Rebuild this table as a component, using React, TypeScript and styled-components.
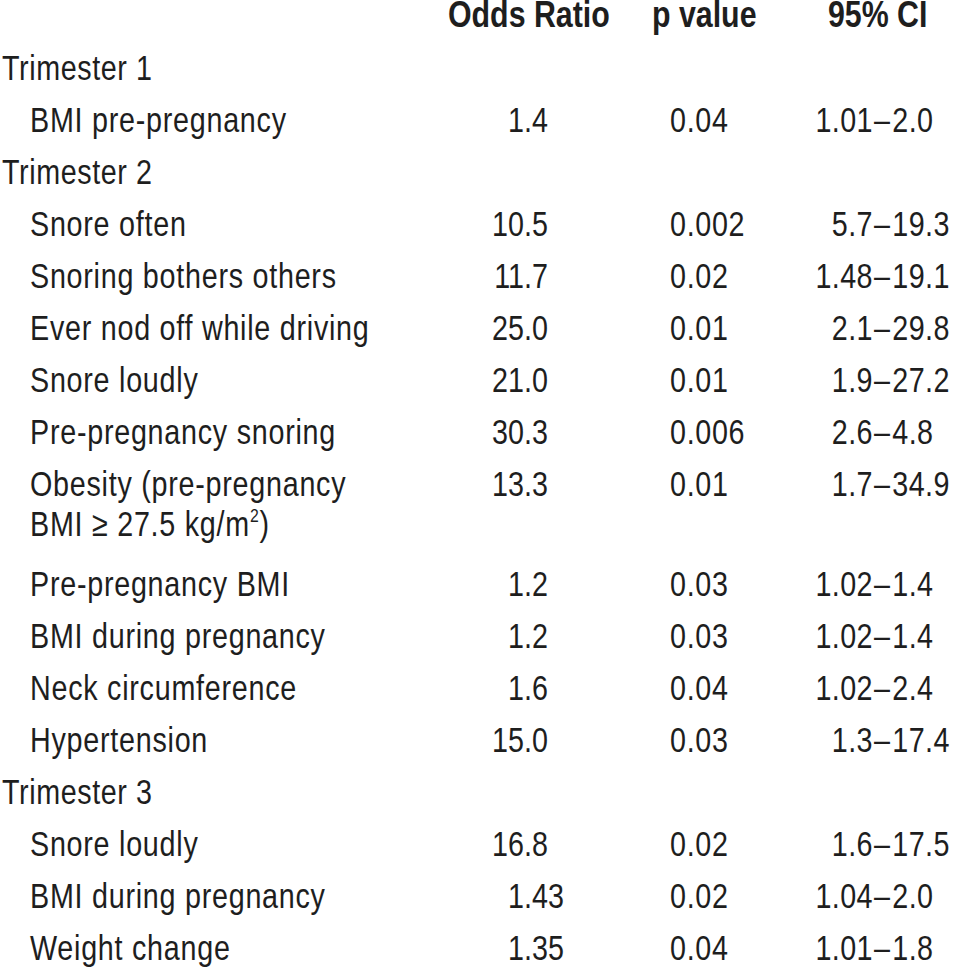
import styled, { createGlobalStyle } from 'styled-components';

interface Entry {
	label: string;
	odds: string;
	p: string;
	ci: [string, string];
	note?: boolean;
}

interface Section {
	title: string;
	rows: Entry[];
}

const sections: Section[] = [
	{
		title: 'Trimester 1',
		rows: [{ label: 'BMI pre-pregnancy', odds: '1.4', p: '0.04', ci: ['1.01', '2.0'] }],
	},
	{
		title: 'Trimester 2',
		rows: [
			{ label: 'Snore often', odds: '10.5', p: '0.002', ci: ['5.7', '19.3'] },
			{ label: 'Snoring bothers others', odds: '11.7', p: '0.02', ci: ['1.48', '19.1'] },
			{ label: 'Ever nod off while driving', odds: '25.0', p: '0.01', ci: ['2.1', '29.8'] },
			{ label: 'Snore loudly', odds: '21.0', p: '0.01', ci: ['1.9', '27.2'] },
			{ label: 'Pre-pregnancy snoring', odds: '30.3', p: '0.006', ci: ['2.6', '4.8'] },
			{ label: 'Obesity (pre-pregnancy', odds: '13.3', p: '0.01', ci: ['1.7', '34.9'], note: true },
			{ label: 'Pre-pregnancy BMI', odds: '1.2', p: '0.03', ci: ['1.02', '1.4'] },
			{ label: 'BMI during pregnancy', odds: '1.2', p: '0.03', ci: ['1.02', '1.4'] },
			{ label: 'Neck circumference', odds: '1.6', p: '0.04', ci: ['1.02', '2.4'] },
			{ label: 'Hypertension', odds: '15.0', p: '0.03', ci: ['1.3', '17.4'] },
		],
	},
	{
		title: 'Trimester 3',
		rows: [
			{ label: 'Snore loudly', odds: '16.8', p: '0.02', ci: ['1.6', '17.5'] },
			{ label: 'BMI during pregnancy', odds: '1.43', p: '0.02', ci: ['1.04', '2.0'] },
			{ label: 'Weight change', odds: '1.35', p: '0.04', ci: ['1.01', '1.8'] },
		],
	},
];

// No Arial Narrow in the sandbox: Liberation Sans squeezed sideways stands in for it.
// Horizontal sizes below are given in on-screen pixels and converted to the unscaled box.
const NARROW = 0.82;
const nx = (px: number) => `${(px / NARROW).toFixed(2)}px`;

const GlobalStyle = createGlobalStyle`
	html, body {
		margin: 0;
		padding: 0;
		background: #ffffff;
	}
	body {
		font-family: "Liberation Sans", Arial, sans-serif;
		color: #1e1e1e;
		-webkit-font-smoothing: antialiased;
	}
`;

export default function App() {
	return (
		<>
			<GlobalStyle />
			<Page>
				<Table>
					<HeaderRow>
						<span />
						<HeadCell $pad={8}>Odds Ratio</HeadCell>
						<HeadCell $pad={12}>p value</HeadCell>
						<HeadCell $pad={28}>95% CI</HeadCell>
					</HeaderRow>
					{sections.map((section) => (
						<Group key={section.title}>
							<Row>
								<Title>{section.title}</Title>
							</Row>
							{section.rows.map((row) => {
								const [whole, frac] = row.odds.split('.');
								return (
									<Row key={row.label + row.odds} $tall={row.note}>
										<Label>
											<span>{row.label}</span>
											{row.note && (
												<SecondLine>
													BMI ≥ 27.5 kg/m<sup>2</sup>)
												</SecondLine>
											)}
										</Label>
										<Odds>
											<Whole>{whole}</Whole>
											<span>.{frac}</span>
										</Odds>
										<PValue>{row.p}</PValue>
										<Interval>
											<Low>{row.ci[0]}</Low>
											<Dash>–</Dash>
											<span>{row.ci[1]}</span>
										</Interval>
									</Row>
								);
							})}
						</Group>
					))}
				</Table>
			</Page>
		</>
	);
}

const Page = styled.div`
	width: 953px;
	height: 967px;
	overflow: hidden;
`;

const Table = styled.div`
	display: flex;
	flex-direction: column;
	width: ${nx(953)};
	font-size: 35px;
	transform: scaleX(${NARROW});
	transform-origin: left top;
`;

const Group = styled.div`
	display: flex;
	flex-direction: column;
`;

const columns = `${nx(440)} ${nx(200)} ${nx(160)} 1fr`;

const HeaderRow = styled.div`
	display: grid;
	grid-template-columns: ${columns};
	line-height: 30px;
	padding-bottom: 14px;
`;

const HeadCell = styled.div<{ $pad: number }>`
	padding-left: ${(p) => nx(p.$pad)};
	font-weight: 700;
	font-size: 37px;
	white-space: nowrap;
`;

const Row = styled.div<{ $tall?: boolean }>`
	display: grid;
	grid-template-columns: ${columns};
	align-items: start;
	line-height: 37px;
	padding: 4.5px 0 ${(p) => (p.$tall ? 15.5 : 10.5)}px;
	white-space: nowrap;
`;

const Title = styled.div`
	padding-left: ${nx(2)};
	letter-spacing: ${nx(0.6)};
`;

const Label = styled.div`
	display: flex;
	flex-direction: column;
	padding-left: ${nx(30)};
	letter-spacing: ${nx(0.75)};
`;

const SecondLine = styled.span`
	line-height: 43px;

	sup {
		font-size: 55%;
		line-height: 0;
		vertical-align: 0.72em;
	}
`;

const Odds = styled.div`
	display: grid;
	grid-template-columns: ${nx(84)} auto;
`;

const Whole = styled.span`
	text-align: right;
`;

const PValue = styled.div`
	padding-left: ${nx(30)};
	letter-spacing: ${nx(0.7)};
`;

const Interval = styled.div`
	display: grid;
	grid-template-columns: ${nx(73)} auto auto;
	justify-content: start;
	letter-spacing: ${nx(0.4)};
`;

const Low = styled.span`
	text-align: right;
`;

const Dash = styled.span`
	padding: 0 ${nx(2)} 0 ${nx(1)};
`;
